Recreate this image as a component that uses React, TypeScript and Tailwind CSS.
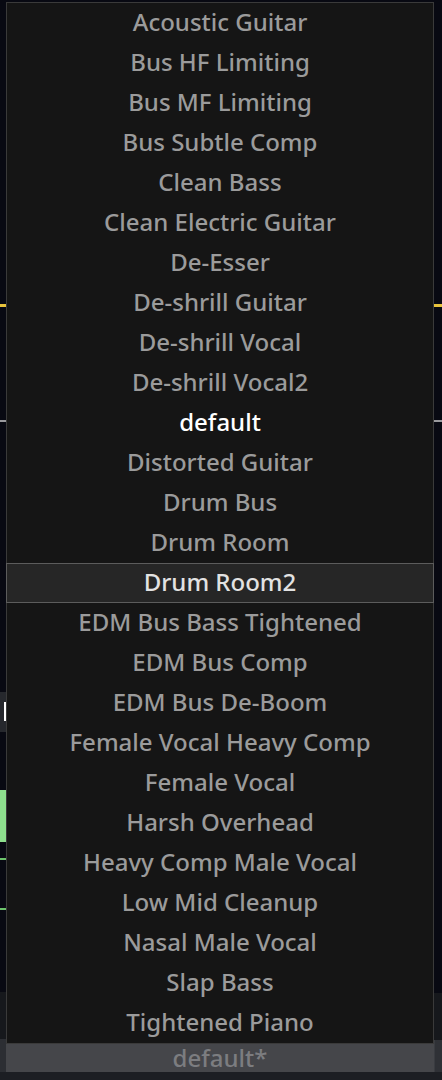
const PRESETS = [
  'Acoustic Guitar',
  'Bus HF Limiting',
  'Bus MF Limiting',
  'Bus Subtle Comp',
  'Clean Bass',
  'Clean Electric Guitar',
  'De-Esser',
  'De-shrill Guitar',
  'De-shrill Vocal',
  'De-shrill Vocal2',
  'default',
  'Distorted Guitar',
  'Drum Bus',
  'Drum Room',
  'Drum Room2',
  'EDM Bus Bass Tightened',
  'EDM Bus Comp',
  'EDM Bus De-Boom',
  'Female Vocal Heavy Comp',
  'Female Vocal',
  'Harsh Overhead',
  'Heavy Comp Male Vocal',
  'Low Mid Cleanup',
  'Nasal Male Vocal',
  'Slap Bass',
  'Tightened Piano',
];

const CURRENT = 'default';
const HOVERED = 'Drum Room2';

export default function App() {
  return (
    <div
      className="flex h-[1080px] w-[442px] flex-col overflow-hidden bg-[#080912]"
      style={{ fontFamily: '"Noto Sans", "Open Sans", sans-serif' }}
    >
      <div className="flex h-[1072px]">
        <LeftStrip />

        <div className="flex w-[428px] flex-col pt-[2px]">
          <ul className="border border-[#3a3a3a] bg-[#151515]">
            {PRESETS.map((name) => (
              <PresetRow
                key={name}
                name={name}
                current={name === CURRENT}
                hovered={name === HOVERED}
              />
            ))}
          </ul>
          <div className="flex flex-1 items-center justify-center bg-[#45464a] text-[24px] font-medium leading-none text-[#7c7d80]">
            default*
          </div>
        </div>

        <RightStrip />
      </div>
      <div className="flex-1 bg-[#1c1e23]" />
    </div>
  );
}

function PresetRow({
  name,
  current,
  hovered,
}: {
  name: string;
  current?: boolean;
  hovered?: boolean;
}) {
  let cls = 'border-transparent text-[#9b9b9b]';
  if (hovered) cls = 'border-[#5c5c5c] bg-[#262626] text-[#e2e2e2]';
  if (current) cls = 'border-transparent text-white';
  return (
    <li
      className={`-mx-px flex h-[40px] items-center justify-center border pb-[2px] text-[24px] font-medium leading-none ${cls}`}
    >
      {name}
    </li>
  );
}

// the host window peeking out left of the popup
function LeftStrip() {
  return (
    <div className="flex w-[6px] flex-col">
      <div className="h-[304px]" />
      <div className="h-[3px] bg-[#e8c33c]" />
      <div className="h-[113px]" />
      <div className="h-[2px] bg-[#9a9a9e]" />
      <div className="h-[270px]" />
      <div className="flex h-[40px] items-start justify-end bg-[#26282d] pt-[10px]">
        <div className="h-[19px] w-[2px] bg-white" />
      </div>
      <div className="h-[58px]" />
      <div className="h-[52px] bg-[#8ee08e]" />
      <div className="h-[16px]" />
      <div className="h-[2px] bg-[#6cc46c]" />
      <div className="h-[48px]" />
      <div className="h-[2px] bg-[#6cc46c]" />
      <div className="h-[82px]" />
      <div className="h-[47px] bg-[#16181c]" />
      <div className="flex-1 bg-[#2c2e33]" />
    </div>
  );
}

function RightStrip() {
  return (
    <div className="flex w-[8px] flex-col">
      <div className="h-[304px]" />
      <div className="h-[3px] bg-[#e8c33c]" />
      <div className="h-[113px]" />
      <div className="h-[2px] bg-[#9a9a9e]" />
      <div className="h-[571px]" />
      <div className="h-[47px] bg-[#16181c]" />
      <div className="flex-1 border-l border-[#3a3c41] bg-[#2f3136]" />
    </div>
  );
}
